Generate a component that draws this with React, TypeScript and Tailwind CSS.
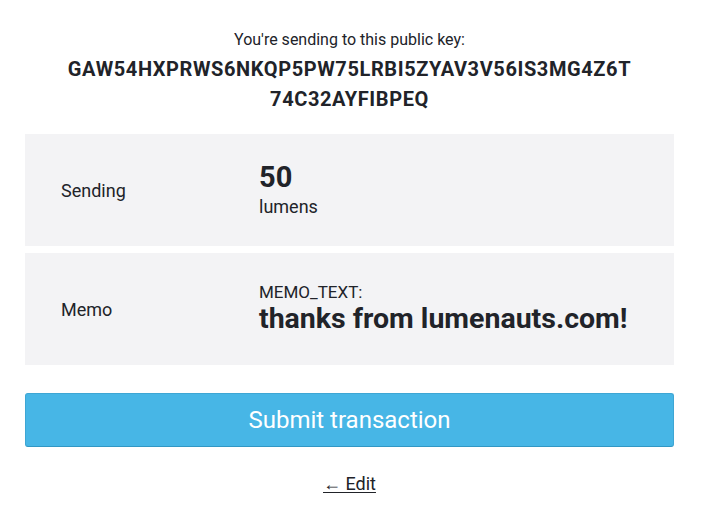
export default function App() {
  return (
    <div
      className="w-[701px] h-[512px] bg-white text-[#212329] flex flex-col items-center pl-[25px] pr-[27px]"
      style={{ fontFamily: '"Roboto", "Liberation Sans", sans-serif' }}
    >
      <div className="mt-[31px] text-[16px] leading-[18px]">You're sending to this public key:</div>
      <div className="mt-[5px] text-center font-bold text-[20px] leading-[30px] tracking-[0.6px]">
        <div>GAW54HXPRWS6NKQP5PW75LRBI5ZYAV3V56IS3MG4Z6T</div>
        <div>74C32AYFIBPEQ</div>
      </div>

      <div className="mt-[20px] w-full flex flex-col gap-[7px]">
        <div className="h-[112px] bg-[#f3f3f5] flex items-center">
          <div className="w-[234px] pl-[36px] text-[18px]">Sending</div>
          <div className="flex flex-col">
            <div className="font-bold text-[29px] leading-[32px]">50</div>
            <div className="mt-[2px] text-[18px] leading-[24px]">lumens</div>
          </div>
        </div>
        <div className="h-[112px] bg-[#f3f3f5] flex items-center">
          <div className="w-[234px] pl-[36px] text-[18px]">Memo</div>
          <div className="flex flex-col">
            <div className="text-[17px] leading-[20px]">MEMO_TEXT:</div>
            <div className="font-bold text-[28.5px] leading-[34px]">thanks from lumenauts.com!</div>
          </div>
        </div>
      </div>

      <button className="mt-[28px] w-full h-[54px] rounded-[3px] bg-[#47b6e6] border border-[#3ea6d4] border-b-[#3197c4] text-white text-[24px]">
        Submit transaction
      </button>

      <a className="mt-[23px] text-[18px] underline underline-offset-2 text-[#212329]">← Edit</a>
    </div>
  );
}
